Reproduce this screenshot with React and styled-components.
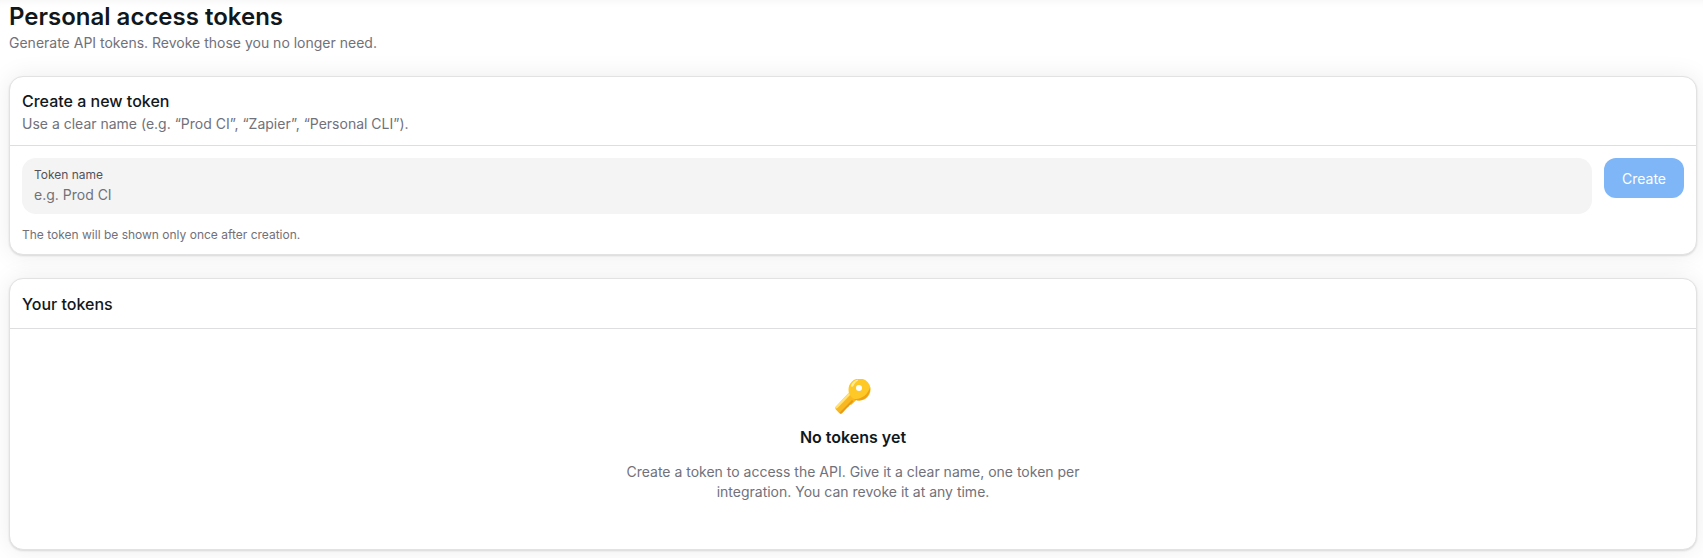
import styled, { createGlobalStyle } from "styled-components";

const GlobalStyle = createGlobalStyle`
  * {
    box-sizing: border-box;
  }
  html,
  body {
    margin: 0;
    background: #fff;
    height: 100%;
  }
  body {
    font-family: Inter, "Liberation Sans", sans-serif;
    color: #11181c;
    overflow: hidden;
  }
`;

const Page = styled.div`
  height: 558px;
  padding: 1px 6px 0 9px;
  box-shadow: inset 0 8px 10px -8px rgba(0, 0, 0, 0.06);
`;

const Header = styled.header`
  margin-bottom: 23px;
`;

const Title = styled.h1`
  margin: 0;
  font-size: 24px;
  line-height: 32px;
  font-weight: 600;
`;

const Subtitle = styled.p`
  margin: 0;
  font-size: 14px;
  line-height: 20px;
  color: #71717a;
`;

const Card = styled.section`
  background: #fff;
  border-radius: 14px;
  border: 1px solid #e2e2e3;
  box-shadow: 0 1px 2px rgba(0, 0, 0, 0.12), 0 0 24px rgba(0, 0, 0, 0.08);
  margin-bottom: 23px;
`;

const CardHeader = styled.div`
  padding: ${(p) => (p.$compact ? "13px 12px 12px" : "12px 12px 11px")};
  border-bottom: 1px solid #dedee0;
`;

const CardTitle = styled.h2`
  margin: 0;
  font-size: 16px;
  line-height: 24px;
  font-weight: 500;
`;

const CardHint = styled.p`
  margin: 1px 0 0;
  font-size: 14px;
  line-height: 20px;
  color: #71717a;
`;

const FormBody = styled.div`
  padding: 12px 12px 11px;
`;

const FormRow = styled.div`
  display: flex;
  align-items: flex-start;
  gap: 12px;
`;

const Field = styled.label`
  flex: 1;
  height: 56px;
  display: flex;
  flex-direction: column;
  padding: 9px 12px 7px;
  background: #f4f4f5;
  border-radius: 14px;
`;

const FieldLabel = styled.span`
  font-size: 12px;
  line-height: 16px;
  color: #52525b;
`;

const FieldInput = styled.input`
  border: 0;
  padding: 0;
  margin-top: 2px;
  background: transparent;
  outline: none;
  font: inherit;
  font-size: 14px;
  line-height: 20px;
  color: #11181c;

  &::placeholder {
    color: #71717a;
    opacity: 1;
  }
`;

const CreateButton = styled.button`
  width: 80px;
  height: 40px;
  border: 0;
  border-radius: 12px;
  background: #7eb6f8;
  color: #fff;
  font: inherit;
  font-size: 14px;
`;

const FormNote = styled.p`
  margin: 13px 0 0;
  font-size: 12px;
  line-height: 16px;
  color: #71717a;
`;

const Empty = styled.div`
  height: 220px;
  display: flex;
  flex-direction: column;
  align-items: center;
  padding-top: 50px;
  text-align: center;
`;

const EmptyTitle = styled.h3`
  margin: 10px 0 0;
  font-size: 16px;
  line-height: 24px;
  font-weight: 600;
`;

const EmptyText = styled.p`
  margin: 13px 0 0;
  width: 480px;
  font-size: 14px;
  line-height: 20px;
  color: #71717a;
`;

function KeyIcon() {
  return (
    <svg width="36" height="36" viewBox="0 0 36 36" aria-hidden="true">
      <path
        d="M14.500 13 .7 27.800c-.6.800-.5 1.900.1 2.600l3.300 3.700c.8.800 1.800.8 2.500.1l2.300-2.300-.2-1.900 2.100-.2.500-2.200 2.200.2.600-2.400 2.300.3 7.500-7.200z"
        fill="#f9b81f"
      />
      <path d="M14.500 13 .7 27.800c-.4.600-.5 1.300-.2 1.900l2-.7L16.500 14.500z" fill="#ffe27a" />
      <path
        d="M4.500 33.800 17 21l1.500 1.200L7 34.300c-.8.600-1.700.400-2.500-.5z"
        fill="#e89c12"
      />
      <path
        fillRule="evenodd"
        d="M24.500 -.5a11 11 0 1 1 0 22 11 11 0 0 1 0-22zm-.5 6.500a3 3 0 1 0 0 6 3 3 0 0 0 0-6z"
        fill="#fec827"
      />
      <path
        d="M35.200 8c.8 6-3.700 13.200-10.700 13.500-2.500.1-4.700-.7-6.400-2.100 6 2.500 14.800-3 17.100-11.400z"
        fill="#eda316"
      />
      <path
        d="M16 6.500c1-2.800 3.500-5 6.300-5.700.8-.2 1.100.6.400 1-2.100 1.300-3.500 3-4.400 5.300-.5 1.300-2.700.8-2.300-.6z"
        fill="#ffec9e"
      />
    </svg>
  );
}

export default function App() {
  return (
    <>
      <GlobalStyle />
      <Page>
        <Header>
          <Title>Personal access tokens</Title>
          <Subtitle>Generate API tokens. Revoke those you no longer need.</Subtitle>
        </Header>

        <Card>
          <CardHeader>
            <CardTitle>Create a new token</CardTitle>
            <CardHint>
              Use a clear name (e.g. “Prod CI”, “Zapier”, “Personal CLI”).
            </CardHint>
          </CardHeader>
          <FormBody>
            <FormRow>
              <Field>
                <FieldLabel>Token name</FieldLabel>
                <FieldInput placeholder="e.g. Prod CI" />
              </Field>
              <CreateButton type="button">Create</CreateButton>
            </FormRow>
            <FormNote>The token will be shown only once after creation.</FormNote>
          </FormBody>
        </Card>

        <Card>
          <CardHeader $compact>
            <CardTitle>Your tokens</CardTitle>
          </CardHeader>
          <Empty>
            <KeyIcon />
            <EmptyTitle>No tokens yet</EmptyTitle>
            <EmptyText>
              Create a token to access the API. Give it a clear name, one token
              per integration. You can revoke it at any time.
            </EmptyText>
          </Empty>
        </Card>
      </Page>
    </>
  );
}
